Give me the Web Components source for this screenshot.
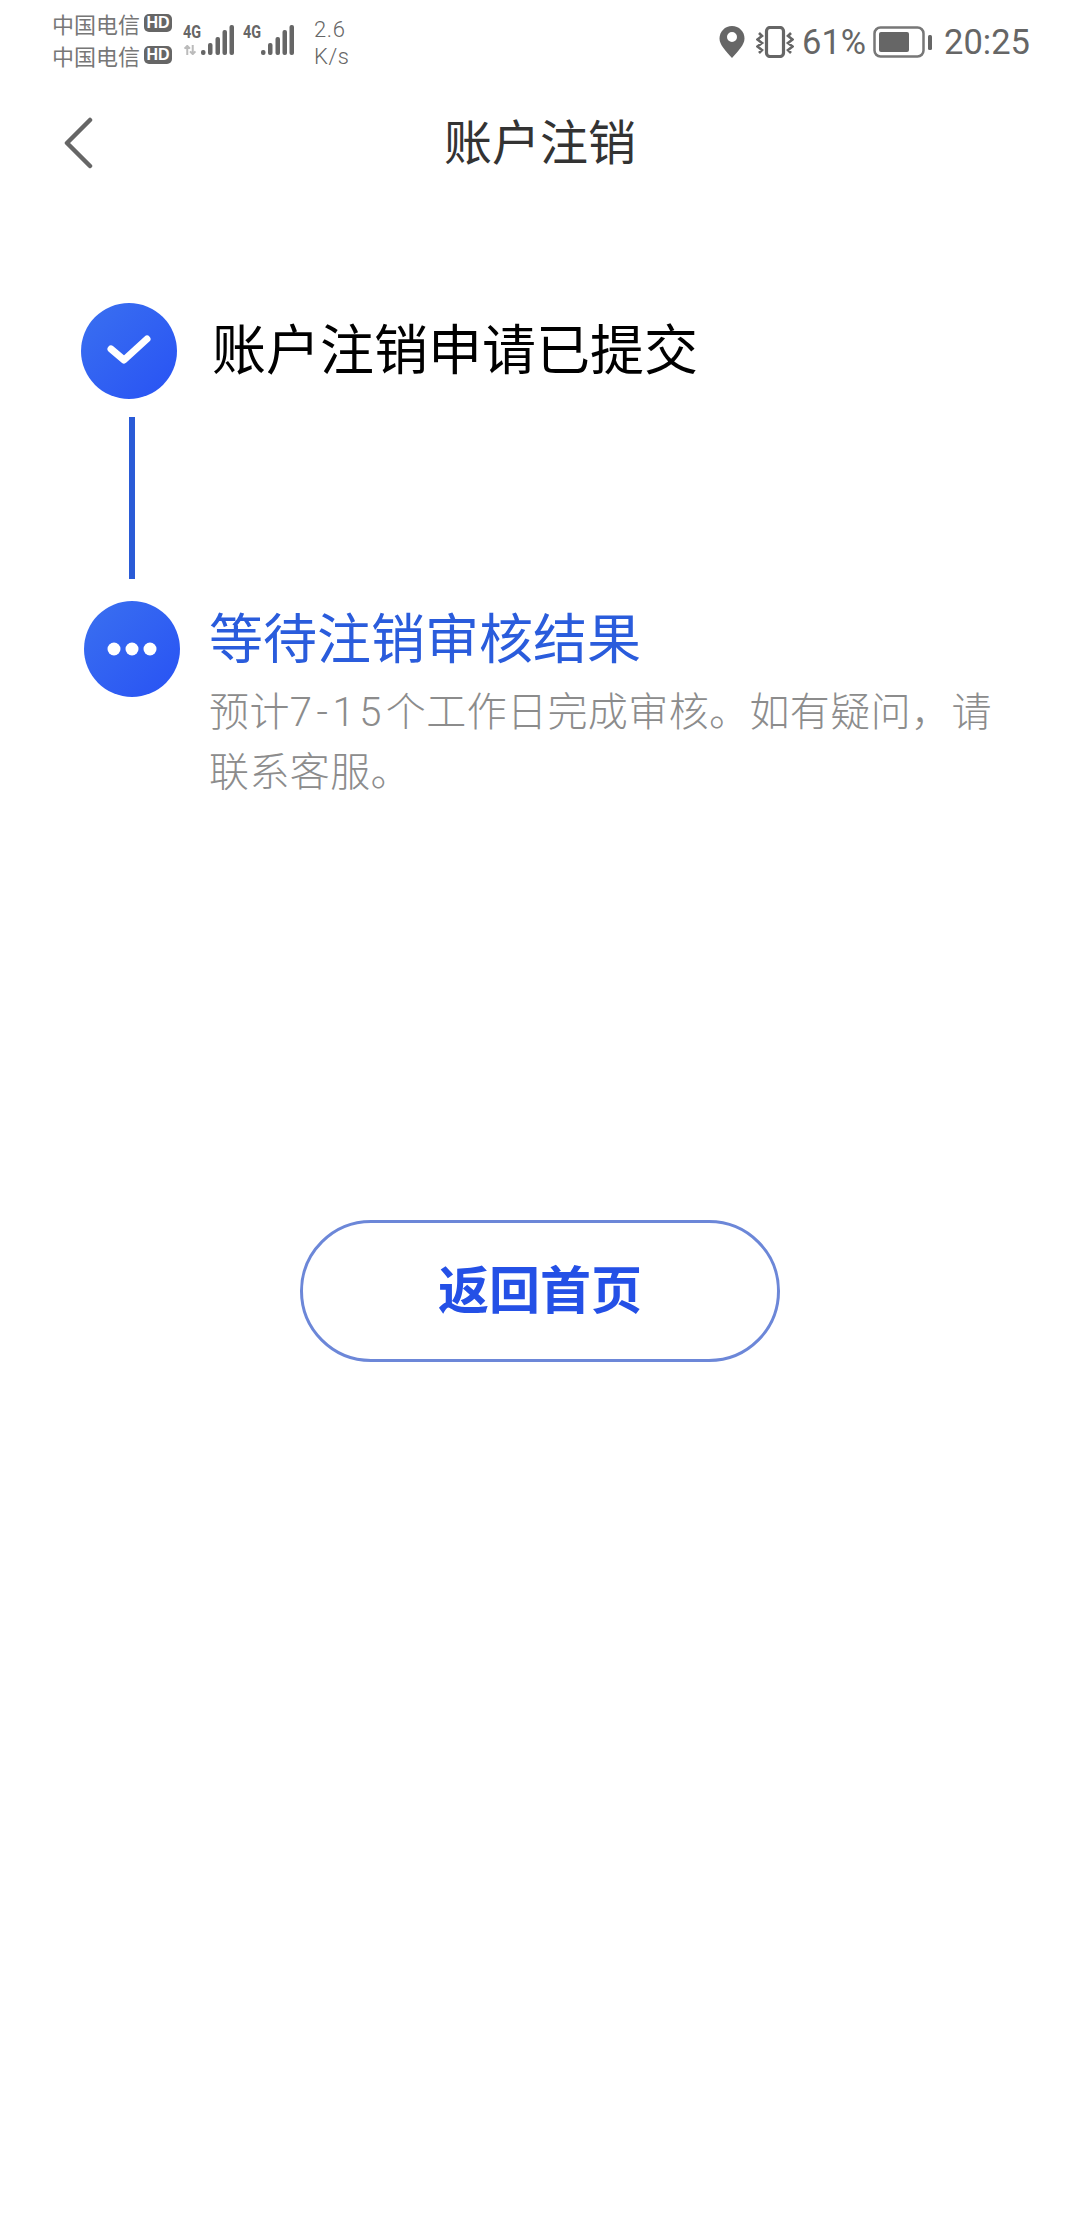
<!DOCTYPE html>
<html lang="zh-CN">
<head>
<meta charset="utf-8">
<title>账户注销</title>
<style>
html,body{margin:0;padding:0;background:#fff}
body{font-family:"Noto Sans CJK SC","Noto Sans",sans-serif}
</style>
</head>
<body>
<app-page>
  <status-bar slot="status"></status-bar>
  <nav-header slot="nav">账户注销</nav-header>
  <step-item kind="done" title-text="账户注销申请已提交"></step-item>
  <step-line></step-line>
  <step-item kind="wait" title-text="等待注销审核结果">预计<span style="font-family:Roboto,sans-serif;font-weight:300;letter-spacing:4.5px;line-height:1">7-15</span>个工作日完成审核。如有疑问，请<br>联系客服。</step-item>
  <outline-button>返回首页</outline-button>
</app-page>
<script>
function def(name, html){
  customElements.define(name, class extends HTMLElement{
    constructor(){super();this.attachShadow({mode:'open'}).innerHTML=html;}
  });
}
def('app-page',`<style>
:host{display:flex;flex-direction:column;width:1080px;height:2240px;background:#fff;overflow:hidden}
.content{display:flex;flex-direction:column;padding-top:99px}
</style><slot name="status"></slot><slot name="nav"></slot><div class="content"><slot></slot></div>`);

const sig=`<svg width="33" height="30" viewBox="0 0 33 30" fill="#666"><rect x="0" y="25" width="4.500" height="5" rx="2"/><rect x="7" y="18" width="4.500" height="12" rx="2"/><rect x="14.500" y="12" width="4.500" height="18" rx="2"/><rect x="21.500" y="5" width="4.500" height="25" rx="2"/><rect x="28.500" y="0" width="4.500" height="30" rx="2"/></svg>`;
def('status-bar',`<style>
:host{display:flex;align-items:center;height:82px;box-sizing:border-box;padding:0 50px 0 52px;color:#666;font-family:"Noto Sans CJK SC","Noto Sans",sans-serif}
.carriers{display:flex;flex-direction:column;gap:6px;font-size:22px;line-height:26px;margin-top:-5px;color:#777}
.carriers div{display:flex;align-items:center;gap:4px;white-space:nowrap}
.hd{display:inline-block;width:28px;height:18px;border-radius:5px;background:#666;color:#fff;font:700 16px/18px "Liberation Sans",sans-serif;text-align:center}
.net{display:flex;align-items:flex-start;width:50px;height:30px;margin:-2px 0 0 11px;gap:1px}
.net+.net{margin-left:10px}
.label{display:flex;flex-direction:column;width:17px;height:30px;flex:none}
.label b{font:700 18px/13px Roboto,"Liberation Sans",sans-serif;transform:scaleX(.8);transform-origin:left top;white-space:nowrap}
.label svg{margin-top:7px}
.net>svg{flex:none}
.speed{display:flex;flex-direction:column;margin:4px 0 0 21px;font:300 22px/27px Roboto,"Liberation Sans",sans-serif;letter-spacing:.6px}
.spacer{flex:1}
.right{display:flex;align-items:center;font:400 34.500px/40px Roboto,"Liberation Sans",sans-serif;margin-top:1px}
</style>
<div class="carriers"><div>中国电信<span class="hd">HD</span></div><div>中国电信<span class="hd">HD</span></div></div>
<div class="net"><div class="label"><b>4G</b><svg width="14" height="11" viewBox="0 0 14 11" fill="none" stroke="#bbb" stroke-width="2.200"><path d="M4 11V1M1 4L4 1L7 4M10 0V10M7 7L10 10L13 7"/></svg></div>${sig}</div>
<div class="net"><div class="label"><b>4G</b></div>${sig}</div>
<div class="speed"><span>2.6</span><span>K/s</span></div>
<div class="spacer"></div>
<div class="right">
<svg width="26" height="32" viewBox="0 0 26 32" fill="#666" style="margin-right:11px"><path fill-rule="evenodd" d="M13 0C6 0 0.500 5.500 0.500 12.500C0.500 19 7 25 13 32C19 25 25.500 19 25.500 12.500C25.500 5.500 20 0 13 0ZM13 6A5 5 0 1 1 13 16A5 5 0 1 1 13 6Z"/></svg>
<svg width="38" height="32" viewBox="0 0 38 32" fill="none" stroke="#666" style="margin-right:8px"><rect x="10.500" y="1.500" width="17" height="29" rx="3.500" stroke-width="3.200"/><path d="M3 7L6 10L1.500 13.500L6 17L1.500 20.500L6 24L3 27M35 7L32 10L36.500 13.500L32 17L36.500 20.500L32 24L35 27" stroke-width="2.600"/></svg>
<span>61%</span>
<svg width="60" height="32" viewBox="0 0 60 32" style="margin:0 11px 0 7px"><rect x="1.500" y="1.500" width="49" height="29" rx="6" fill="none" stroke="#777" stroke-width="2.500"/><rect x="6" y="6" width="30" height="20" rx="2" fill="#666"/><rect x="55" y="9" width="4" height="15" rx="1.500" fill="#666"/></svg>
<span>20:25</span>
</div>`);

def('nav-header',`<style>
:host{display:flex;align-items:center;justify-content:center;position:relative;height:122px;color:#333;font-size:48px;line-height:114px;padding-bottom:8px;box-sizing:border-box;font-family:"Noto Sans CJK SC",sans-serif}
svg{position:absolute;left:62px;top:35px}
</style><svg width="32" height="54" viewBox="0 0 32 54" fill="none" stroke="#666" stroke-width="4.500" stroke-linecap="round" stroke-linejoin="round"><path d="M28 3L5 26L28 49"/></svg><slot></slot>`);

customElements.define('step-item',class extends HTMLElement{
  constructor(){
    super();
    this.attachShadow({mode:'open'});
  }
  connectedCallback(){
    const done=this.getAttribute('kind')==='done';
    const icon=done
      ? `<svg width="96" height="96" viewBox="0 0 96 96" fill="none" stroke="#fff" stroke-width="7" stroke-linecap="round" stroke-linejoin="round"><path d="M30 46L43 57L66 36"/></svg>`
      : `<svg width="96" height="96" viewBox="0 0 96 96" fill="#fff"><circle cx="30" cy="48" r="6.500"/><circle cx="48" cy="48" r="6.500"/><circle cx="66" cy="48" r="6.500"/></svg>`;
    const desc=this.childNodes.length?`<div class="desc"><slot></slot></div>`:'';
    this.shadowRoot.innerHTML=`<style>
:host{display:flex;align-items:flex-start;padding-left:${done?81:84}px;gap:${done?35:29}px;color:${done?'#000':'#2a5cdc'}}
.dot{flex:none;width:96px;height:96px;border-radius:50%;background:linear-gradient(135deg,#3a70f0,#2852f4)}
.dot svg{display:block}
.body{flex:1;padding-right:60px}
.title{font-size:54px;line-height:${done?'88px':'70px'}}
.desc{font-size:40px;line-height:60px;color:#8c8c8c;font-weight:300;margin-top:8px;letter-spacing:.4px;white-space:nowrap}
</style><div class="dot">${icon}</div><div class="body"><div class="title">${this.getAttribute('title-text')}</div>${desc}</div>`;
  }
});

def('step-line',`<style>
:host{display:block;width:6px;height:162px;background:#2a5bd7;margin:18px 0 22px 129px}
</style>`);

def('outline-button',`<style>
:host{display:flex;align-items:center;justify-content:center;box-sizing:border-box;width:480px;height:142px;margin:421px 0 0 300px;padding-bottom:8px;border:3px solid #6c87d8;border-radius:71px;color:#2450e6;font-size:51px;font-weight:700;font-family:"Noto Sans CJK SC",sans-serif}
</style><slot></slot>`);
</script>
</body>
</html>
